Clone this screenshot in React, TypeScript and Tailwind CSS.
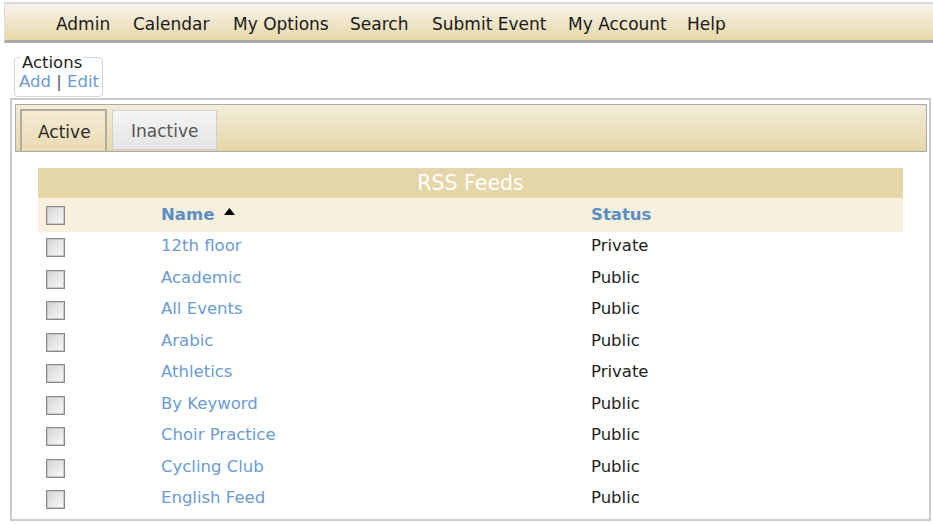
import React from "react";

const menu: [string, number][] = [
  ["Admin", 77],
  ["Calendar", 100],
  ["My Options", 117],
  ["Search", 82],
  ["Submit Event", 136],
  ["My Account", 119],
  ["Help", 60],
];

const rows: [string, string][] = [
  ["12th floor", "Private"],
  ["Academic", "Public"],
  ["All Events", "Public"],
  ["Arabic", "Public"],
  ["Athletics", "Private"],
  ["By Keyword", "Public"],
  ["Choir Practice", "Public"],
  ["Cycling Club", "Public"],
  ["English Feed", "Public"],
];

function Box() {
  return (
    <div className="w-[19px] h-[19px] border border-[#888888] shadow-[inset_0_0_0_1px_#c8c8c8] bg-gradient-to-br from-[#d2d2d2] to-[#fbfbfb]" />
  );
}

export default function App() {
  return (
    <div className="w-[933px] h-[524px] bg-white overflow-hidden font-['DejaVu_Sans',sans-serif] text-[16.5px] text-[#1e1e1e]">
      {/* top menu */}
      <div className="mt-[2px] ml-[4px] h-[41px] border-t-2 border-l border-[#dcdcdc] border-b-[3px] border-b-[#a9a9a9] bg-gradient-to-b from-[#f6f3ec] to-[#e7d7a8] flex items-center pt-[6px] pl-[51px] text-[17px] text-[#1a1a1a]">
        {menu.map(([m, w]) => (
          <div key={m} className="shrink-0 whitespace-nowrap" style={{ width: w }}>
            {m}
          </div>
        ))}
      </div>

      {/* actions box */}
      <div className="mt-[14px] ml-[14px] w-[89px] h-[40px] border border-[#cdd6de] rounded-[4px] pl-[4px]">
        <div className="w-fit bg-white px-[2px] ml-[1px] -mt-[4px] leading-[18.5px]">Actions</div>
        <div className="leading-[18.5px] text-[#6a9bd2]">
          Add <span className="text-[#555]">|</span> Edit
        </div>
      </div>

      {/* main panel */}
      <div className="mt-[1px] ml-[10px] w-[921px] h-[423px] border-2 border-[#cbcbcb]">
        {/* tab bar */}
        <div className="mt-[4px] ml-[3px] mr-[2px] h-[48px] border border-[#a9a9a9] bg-gradient-to-b from-[#f3edd9] to-[#e5d6a6] flex items-end pl-[4px] gap-[5px] text-[17px]">
          <div className="w-[87px] h-[42px] border-2 border-b-0 border-[#b0aca0] bg-gradient-to-b from-[#f3ebd4] to-[#e9dbb2] flex items-center pt-[4px] pl-[16px] text-[#2a2a2a]">
            Active
          </div>
          <div className="w-[105px] h-[40px] mb-[1px] border border-[#cfcfcf] bg-gradient-to-b from-[#f5f5f5] to-[#e4e4e4] flex items-center pt-[4px] pl-[18px] text-[#555]">
            Inactive
          </div>
        </div>

        {/* table */}
        <div className="mt-[16px] ml-[26px] w-[865px]">
          <div className="h-[30px] bg-[#e5d6a9] flex items-center justify-center text-white text-[20.5px] pt-[1px]">
            RSS Feeds
          </div>
          <div className="h-[34px] bg-[#f6f0dc] flex items-center font-bold">
            <div className="w-[123px] pl-[8px]">
              <Box />
            </div>
            <div className="w-[430px] flex items-center text-[#5a8ec4]">
              Name
              <svg width="11" height="7" viewBox="0 0 11 7" className="ml-[10px] mb-[8px]">
                <polygon points="5.5,0 11,7 0,7" fill="#000" />
              </svg>
            </div>
            <div className="text-[#5a8ec4]">Status</div>
          </div>
          {rows.map(([n, s]) => (
            <div key={n} className="h-[31.5px] flex items-center">
              <div className="w-[123px] pl-[8px]">
                <Box />
              </div>
              <div className="w-[430px] text-[#6a9bd2] pb-[3px] leading-[20px]">{n}</div>
              <div className="pb-[3px] leading-[20px]">{s}</div>
            </div>
          ))}
        </div>
      </div>
    </div>
  );
}
